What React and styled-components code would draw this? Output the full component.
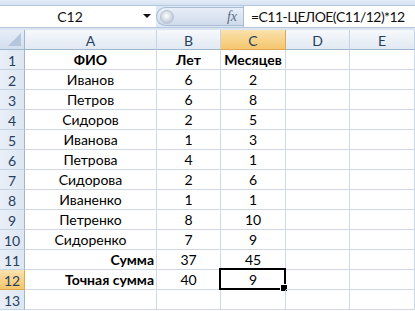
import React from 'react';
import styled, { createGlobalStyle } from 'styled-components';

const GlobalStyle = createGlobalStyle`
  html, body { margin: 0; padding: 0; background: #fff; }
  body { font-family: Lato, "Noto Sans", sans-serif; }
  * { box-sizing: border-box; }
`;

const COLS = ['A', 'B', 'C', 'D', 'E'];
const COL_WIDTHS = '25px 132px 64px 65px 64px 65px';

const rows = [
  { a: 'ФИО', b: 'Лет', c: 'Месяцев', bold: true },
  { a: 'Иванов', b: '6', c: '2' },
  { a: 'Петров', b: '6', c: '8' },
  { a: 'Сидоров', b: '2', c: '5' },
  { a: 'Иванова', b: '1', c: '3' },
  { a: 'Петрова', b: '4', c: '1' },
  { a: 'Сидорова', b: '2', c: '6' },
  { a: 'Иваненко', b: '1', c: '1' },
  { a: 'Петренко', b: '8', c: '10' },
  { a: 'Сидоренко', b: '7', c: '9' },
  { a: 'Сумма', b: '37', c: '45', right: true },
  { a: 'Точная сумма', b: '40', c: '9', right: true, selected: true },
  { a: '', b: '', c: '' }
];

const Window = styled.div`
  width: 415px;
  height: 311px;
  overflow: hidden;
  background: #fff;
`;

const TopStrip = styled.div`
  height: 6px;
  background: linear-gradient(#e3ecf8, #d5e1f2);
  border-bottom: 1px solid #b6c8e0;
`;

const FormulaBar = styled.div`
  display: flex;
  align-items: stretch;
  height: 21px;
  background: #dfe8f5;
`;

const NameBox = styled.div`
  position: relative;
  width: 156px;
  background: #fff;
  display: flex;
  align-items: center;
  justify-content: center;
  font-size: 14px;
  color: #111;
  padding-right: 16px;
`;

const DropArrow = styled.span`
  position: absolute;
  right: 5px;
  top: 8px;
  width: 0;
  height: 0;
  border-left: 4px solid transparent;
  border-right: 4px solid transparent;
  border-top: 4px solid #111;
`;

const Pill = styled.div`
  display: flex;
  align-items: center;
  width: 87px;
  margin: 1px 0;
  padding-left: 3px;
  border-radius: 10px 0 0 10px;
  background: linear-gradient(#e8eef7, #cfdbeb);
  border: 1px solid #a9bcd6;
  border-right: none;
`;

const Knob = styled.span`
  width: 14px;
  height: 14px;
  border-radius: 50%;
  background: radial-gradient(circle at 45% 40%, #ffffff, #c9d3df 60%, #a9b6c6);
  border: 1px solid #b8c4d3;
`;

const Fx = styled.span`
  margin-left: auto;
  margin-right: 6px;
  font-family: "Liberation Serif", serif;
  font-style: italic;
  font-size: 14px;
  color: #5b6b82;
`;

const FormulaInput = styled.div`
  flex: 1;
  background: #fff;
  border-left: 1px solid #a9bcd6;
  display: flex;
  align-items: center;
  padding-left: 7px;
  font-size: 14px;
  letter-spacing: -0.55px;
  color: #111;
  white-space: nowrap;
`;

const Spacer = styled.div`
  height: 3px;
  background: #dbe5f2;
  border-top: 1px solid #b6c8e0;
`;

const Grid = styled.div`
  display: grid;
  grid-template-columns: ${COL_WIDTHS};
  grid-auto-rows: 20px;
`;

const Corner = styled.div`
  position: relative;
  background: linear-gradient(#e6edf7, #d3deee);
  border-right: 1px solid #9eb6ce;
  border-bottom: 1px solid #9eb6ce;
  &::after {
    content: '';
    position: absolute;
    right: 3px;
    bottom: 3px;
    width: 0;
    height: 0;
    border-left: 13px solid transparent;
    border-bottom: 13px solid #b5c6dc;
  }
`;

const Header = styled.div`
  display: flex;
  align-items: center;
  justify-content: center;
  padding-top: 1px;
  font-size: 14px;
  color: #27405e;
  background: ${p => p.$active
    ? 'linear-gradient(#fbe1ad, #f4c66c)'
    : 'linear-gradient(#f6f9fc, #e2e9f3)'};
  border-right: 1px solid ${p => p.$active ? '#e0a850' : '#c5d3e3'};
  border-bottom: 1px solid ${p => p.$active ? '#e0a850' : '#9eb6ce'};
`;

const RowHeader = styled(Header)`
  padding-top: 2px;
  background: ${p => p.$active
    ? 'linear-gradient(#fbe1ad, #f4c66c)'
    : 'linear-gradient(90deg, #e9eff8, #dde6f2)'};
  border-right: 1px solid ${p => p.$active ? '#e0a850' : '#9eb6ce'};
  border-bottom: 1px solid ${p => p.$active ? '#e0a850' : '#c5d3e3'};
`;

const Cell = styled.div`
  position: relative;
  display: flex;
  align-items: flex-end;
  justify-content: ${p => p.$right ? 'flex-end' : 'center'};
  padding: 0 2px 1px;
  font-size: 14px;
  line-height: 17px;
  font-weight: ${p => p.$bold ? 700 : 400};
  color: #000;
  white-space: nowrap;
  border-right: 1px solid #d0d7e5;
  border-bottom: 1px solid #d0d7e5;
`;

const Selection = styled.span`
  position: absolute;
  left: -2px;
  top: -2px;
  right: -1px;
  bottom: -1px;
  border: 2px solid #000;
  pointer-events: none;
  &::after {
    content: '';
    position: absolute;
    right: -4px;
    bottom: -4px;
    width: 6px;
    height: 6px;
    background: #000;
    border: 1px solid #fff;
  }
`;

export default function App() {
  return (
    <Window>
      <GlobalStyle />
      <TopStrip />
      <FormulaBar>
        <NameBox>
          C12
          <DropArrow />
        </NameBox>
        <Pill>
          <Knob />
          <Fx>fx</Fx>
        </Pill>
        <FormulaInput>=C11-ЦЕЛОЕ(C11/12)*12</FormulaInput>
      </FormulaBar>
      <Spacer />
      <Grid>
        <Corner />
        {COLS.map(c => (
          <Header key={c} $active={c === 'C'}>{c}</Header>
        ))}
        {rows.map((r, i) => (
          <React.Fragment key={i}>
            <RowHeader $active={r.selected}>{i + 1}</RowHeader>
            <Cell $bold={r.bold || r.right} $right={r.right}>{r.a}</Cell>
            <Cell $bold={r.bold}>{r.b}</Cell>
            <Cell $bold={r.bold}>
              {r.c}
              {r.selected && <Selection />}
            </Cell>
            <Cell />
            <Cell />
          </React.Fragment>
        ))}
      </Grid>
    </Window>
  );
}
